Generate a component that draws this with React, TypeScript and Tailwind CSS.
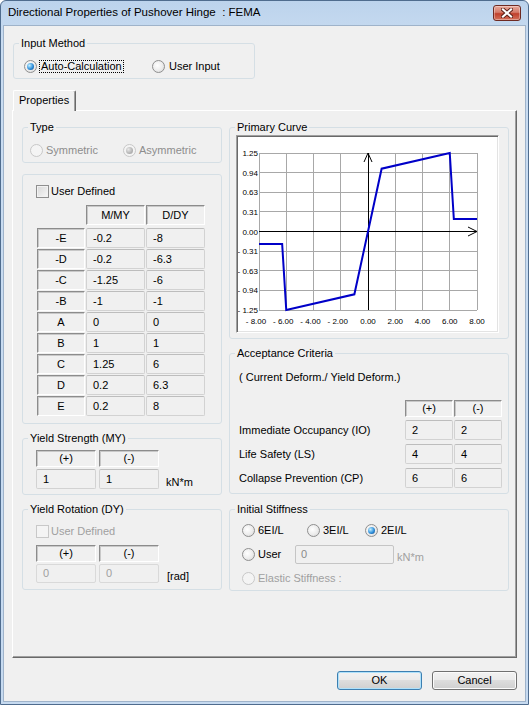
import React from "react";

function Radio({ checked = false, disabled = false }: { checked?: boolean; disabled?: boolean }) {
  return (
    <span
      className={`w-[13px] h-[13px] rounded-full border flex items-center justify-center shrink-0 ${
        disabled
          ? "border-[#c8c8c8] bg-[#f4f4f4]"
          : "border-[#8f8f8f] bg-[radial-gradient(circle_at_40%_40%,#ffffff,#ececec_55%,#d2d2d2)]"
      }`}
    >
      {checked && (
        <span
          className={`w-[7px] h-[7px] rounded-full ${
            disabled
              ? "bg-[radial-gradient(circle_at_35%_35%,#e8e8e8,#b4b4b4_60%,#9a9a9a)]"
              : "bg-[radial-gradient(circle_at_35%_35%,#c4f0ff,#2f90dc_55%,#0b3b78)]"
          }`}
        />
      )}
    </span>
  );
}

function Check({ disabled = false }: { disabled?: boolean }) {
  return (
    <span
      className={`w-[13px] h-[13px] border shrink-0 ${
        disabled
          ? "border-[#c8c8c8] bg-[#f4f4f4]"
          : "border-[#8f8f8f] bg-[linear-gradient(135deg,#d8d8d8,#f8f8f8)] shadow-[inset_0_0_0_1px_#f2f2f2]"
      }`}
    />
  );
}

function Group({
  label,
  className = "",
  children,
}: {
  label: string;
  className?: string;
  children?: React.ReactNode;
}) {
  return (
    <fieldset className={`border border-[#d5dfe5] rounded-[3px] min-w-0 ${className}`}>
      <legend className="ml-[5px] px-[2px] leading-[14px]">{label}</legend>
      {children}
    </fieldset>
  );
}

function Hdr({ children, className = "" }: { children?: React.ReactNode; className?: string }) {
  return (
    <div
      className={`flex items-center justify-center border-t border-l border-r border-b border-t-[#8c8c8c] border-l-[#8c8c8c] border-r-white border-b-white shadow-[inset_1px_1px_0_#c8c8c8] ${className}`}
    >
      {children}
    </div>
  );
}

function Val({
  children,
  className = "",
  disabled = false,
}: {
  children?: React.ReactNode;
  className?: string;
  disabled?: boolean;
}) {
  return (
    <div
      className={`flex items-center pl-[6px] border rounded-[2px] ${
        disabled ? "border-[#d9d9d9] text-[#a0a0a0]" : "border-[#d2d2d2] border-t-[#bdbdbd]"
      } ${className}`}
    >
      {children}
    </div>
  );
}

function Chart() {
  const sx = (v: number) => 130 + v * 13.625;
  const sy = (m: number) => 94.5 - m * 62.8;
  const xs = [-8, -6, -4, -2, 0, 2, 4, 6, 8];
  const ys = [1.25, 0.9375, 0.625, 0.3125, 0, -0.3125, -0.625, -0.9375, -1.25];
  const ylab = ["1.25", "0.94", "0.63", "0.31", "0.00", "- 0.31", "- 0.63", "- 0.94", "- 1.25"];
  const xlab = ["- 8.00", "- 6.00", "- 4.00", "- 2.00", "0.00", "2.00", "4.00", "6.00", "8.00"];
  const pts: [number, number][] = [
    [-8, -0.2],
    [-6.3, -0.2],
    [-6, -1.25],
    [-1, -1],
    [0, 0],
    [1, 1],
    [6, 1.25],
    [6.3, 0.2],
    [8, 0.2],
  ];
  const poly = pts.map(([v, m]) => `${sx(v)},${sy(m)}`).join(" ");
  return (
    <svg width="259" height="194" viewBox="0 0 259 194" className="block">
      {xs.map((v) => (
        <line key={"v" + v} x1={sx(v)} y1={sy(1.25)} x2={sx(v)} y2={sy(-1.25)} stroke="#a8a8a8" strokeWidth="1" shapeRendering="crispEdges" />
      ))}
      {ys.map((m) => (
        <line key={"h" + m} x1={sx(-8)} y1={sy(m)} x2={sx(8)} y2={sy(m)} stroke="#a8a8a8" strokeWidth="1" shapeRendering="crispEdges" />
      ))}
      <line x1={sx(0)} y1={sy(-1.25)} x2={sx(0)} y2={sy(1.25)} stroke="#000" strokeWidth="1" shapeRendering="crispEdges" />
      <line x1={sx(-8)} y1={sy(0)} x2={sx(8)} y2={sy(0)} stroke="#000" strokeWidth="1" shapeRendering="crispEdges" />
      <polyline points={`${sx(0) - 4},${sy(1.25) + 9} ${sx(0)},${sy(1.25)} ${sx(0) + 4},${sy(1.25) + 9}`} fill="none" stroke="#000" strokeWidth="1" />
      <polyline points={`${sx(8) - 9},${sy(0) - 4.5} ${sx(8)},${sy(0)} ${sx(8) - 9},${sy(0) + 4.5}`} fill="none" stroke="#000" strokeWidth="1" />
      <polyline points={poly} fill="none" stroke="#0000c8" strokeWidth="2" strokeLinejoin="miter" />
      {ys.map((m, i) => (
        <text key={"yl" + i} x={20} y={sy(m) + 3} textAnchor="end" fontSize="8" fontFamily="Liberation Sans, Arial, sans-serif" fill="#000">
          {ylab[i]}
        </text>
      ))}
      {xs.map((v, i) => (
        <text key={"xl" + i} x={sx(v) - (v < 0 ? 3 : 0)} y={187} textAnchor="middle" fontSize="8" fontFamily="Liberation Sans, Arial, sans-serif" fill="#000">
          {xlab[i]}
        </text>
      ))}
    </svg>
  );
}

function CloseButton() {
  return (
    <div className="w-[28px] h-[16px] rounded-[3px] border border-[#6e2a22] bg-[linear-gradient(to_bottom,#e9a99b,#d47b6a_45%,#c0402c_55%,#d3705a)] shadow-[inset_0_0_0_1px_rgba(255,255,255,0.35)] flex items-center justify-center">
      <svg width="12" height="10" viewBox="0 0 12 10">
        <path d="M2 1.5 L10 8.5 M10 1.5 L2 8.5" stroke="#5a2018" strokeWidth="4" strokeLinecap="square" />
        <path d="M2 1.5 L10 8.5 M10 1.5 L2 8.5" stroke="#ffffff" strokeWidth="2.2" strokeLinecap="square" />
      </svg>
    </div>
  );
}

export default function App() {
  const rows: [string, string, string][] = [
    ["-E", "-0.2", "-8"],
    ["-D", "-0.2", "-6.3"],
    ["-C", "-1.25", "-6"],
    ["-B", "-1", "-1"],
    ["A", "0", "0"],
    ["B", "1", "1"],
    ["C", "1.25", "6"],
    ["D", "0.2", "6.3"],
    ["E", "0.2", "8"],
  ];
  const acc: [string, string, string][] = [
    ["Immediate Occupancy (IO)", "2", "2"],
    ["Life Safety (LS)", "4", "4"],
    ["Collapse Prevention (CP)", "6", "6"],
  ];
  return (
    <div className="w-[529px] h-[705px] border border-[#4f6c8e] rounded-t-[6px] bg-[linear-gradient(to_bottom,#bcd3ec,#c9dcf1_40px,#c6daf0)] flex flex-col font-['Liberation_Sans',Arial,sans-serif] text-[11px] text-black overflow-hidden">
      {/* Title bar */}
      <div className="h-[24px] flex items-center pl-[7px] pr-[7px] shrink-0">
        <span className="flex-1 text-[11.5px]">Directional Properties of Pushover Hinge&nbsp;&nbsp;: FEMA</span>
        <CloseButton />
      </div>

      {/* Client area */}
      <div className="flex-1 mx-[2px] mb-[2px] border border-[#9fb3ca] bg-[#f0f0f0] flex flex-col">
        {/* Input Method */}
        <Group label="Input Method" className="ml-[9px] mt-[10px] w-[242px] h-[43px]">
          <div className="flex items-center pl-[10px] pt-[8px]">
            <div className="flex items-center gap-[3px] w-[128px]">
              <Radio checked />
              <span className="border border-dotted border-black leading-[11px] px-[1px] -ml-[1px]">Auto-Calculation</span>
            </div>
            <div className="flex items-center gap-[4px]">
              <Radio />
              <span>User Input</span>
            </div>
          </div>
        </Group>

        {/* Tab */}
        <div className="mt-[11px] ml-[9px] w-[63px] h-[21px] -mb-[1px] relative z-10 bg-[#f0f0f0] border-t border-l border-r border-t-white border-l-white border-r-[#696969] shadow-[inset_-1px_0_0_#a0a0a0] rounded-t-[2px] flex items-center pl-[5px] pb-[1px]">
          Properties
        </div>

        {/* Panel */}
        <div className="ml-[8px] w-[505px] h-[548px] border border-t-white border-l-white border-r-[#696969] border-b-[#696969] shadow-[inset_-1px_-1px_0_#a0a0a0] flex gap-[7px] pl-[9px] pt-[9px]">
          {/* Left column */}
          <div className="w-[200px] flex flex-col">
            <Group label="Type" className="h-[43px]">
              <div className="flex items-center pl-[7px] pt-[8px] text-[#8d8d8d]">
                <div className="flex items-center gap-[3px] w-[93px]">
                  <Radio disabled />
                  <span>Symmetric</span>
                </div>
                <div className="flex items-center gap-[3px]">
                  <Radio disabled checked />
                  <span>Asymmetric</span>
                </div>
              </div>
            </Group>

            <div className="mt-[11px] h-[250px] border border-[#d5dfe5] rounded-[3px] pt-[10px] pl-[13px]">
              <div className="flex items-center gap-[2px] h-[13px]">
                <Check />
                <span>User Defined</span>
              </div>
              <div className="ml-[1px] mt-[7px] flex gap-[1px]">
                <div className="w-[48px]" />
                <Hdr className="w-[59px] h-[20px]">M/MY</Hdr>
                <Hdr className="w-[59px] h-[20px]">D/DY</Hdr>
              </div>
              <div className="ml-[1px] mt-[3px] flex flex-col gap-[1px]">
                {rows.map(([k, a, b]) => (
                  <div key={k} className="flex gap-[1px]">
                    <Hdr className="w-[48px] h-[20px]">{k}</Hdr>
                    <Val className="w-[59px] h-[20px]">{a}</Val>
                    <Val className="w-[59px] h-[20px]">{b}</Val>
                  </div>
                ))}
              </div>
            </div>

            <Group label="Yield Strength (MY)" className="mt-[7px] h-[64px]">
              <div className="pl-[13px] pt-[5px]">
                <div className="flex gap-[3px]">
                  <Hdr className="w-[60px] h-[17px]">(+)</Hdr>
                  <Hdr className="w-[60px] h-[17px]">(-)</Hdr>
                </div>
                <div className="mt-[2px] flex gap-[3px]">
                  <Val className="w-[60px] h-[20px]">1</Val>
                  <Val className="w-[60px] h-[20px]">1</Val>
                  <span className="ml-[4px] self-end leading-[14px]">kN*m</span>
                </div>
              </div>
            </Group>

            <Group label="Yield Rotation (DY)" className="mt-[7px] h-[88px]">
              <div className="pl-[13px] pt-[9px]">
                <div className="flex items-center gap-[2px] h-[13px] text-[#a0a0a0]">
                  <Check disabled />
                  <span>User Defined</span>
                </div>
                <div className="mt-[7px] flex gap-[3px]">
                  <Hdr className="w-[60px] h-[17px]">(+)</Hdr>
                  <Hdr className="w-[60px] h-[17px]">(-)</Hdr>
                </div>
                <div className="mt-[2px] flex gap-[3px]">
                  <Val disabled className="w-[60px] h-[19px]">0</Val>
                  <Val disabled className="w-[60px] h-[19px]">0</Val>
                  <span className="ml-[5px] self-end leading-[14px]">[rad]</span>
                </div>
              </div>
            </Group>
          </div>

          {/* Right column */}
          <div className="w-[280px] flex flex-col">
            <Group label="Primary Curve" className="h-[219px]">
              <div className="ml-[6px] mt-[1px] w-[263px] h-[198px] bg-white border border-t-[#a0a0a0] border-l-[#a0a0a0] border-r-white border-b-white shadow-[inset_1px_1px_0_#696969,inset_-1px_-1px_0_#e3e3e3] p-[1px] overflow-hidden">
                <Chart />
              </div>
            </Group>

            <Group label="Acceptance Criteria" className="mt-[7px] h-[148px]">
              <div className="pl-[9px] pt-[11px] leading-[12px]">( Current Deform./ Yield Deform.)</div>
              <div className="mt-[17px] flex justify-end gap-[1px] pr-[6px]">
                <Hdr className="w-[48px] h-[17px]">(+)</Hdr>
                <Hdr className="w-[48px] h-[17px]">(-)</Hdr>
              </div>
              <div className="mt-[3px] flex flex-col gap-[4px] pr-[6px]">
                {acc.map(([l, a, b]) => (
                  <div key={l} className="flex items-center gap-[1px]">
                    <span className="flex-1 pl-[9px]">{l}</span>
                    <Val className="w-[48px] h-[20px]">{a}</Val>
                    <Val className="w-[48px] h-[20px]">{b}</Val>
                  </div>
                ))}
              </div>
            </Group>

            <Group label="Initial Stiffness" className="mt-[8px] h-[89px]">
              <div className="pl-[12px] pt-[4px] flex flex-col gap-[4px]">
                <div className="h-[20px] flex items-center">
                  <div className="flex items-center gap-[3px] w-[65px]">
                    <Radio />
                    <span>6EI/L</span>
                  </div>
                  <div className="flex items-center gap-[3px] w-[58px]">
                    <Radio />
                    <span>3EI/L</span>
                  </div>
                  <div className="flex items-center gap-[3px]">
                    <Radio checked />
                    <span>2EI/L</span>
                  </div>
                </div>
                <div className="h-[20px] flex items-center">
                  <div className="flex items-center gap-[3px] w-[53px]">
                    <Radio />
                    <span>User</span>
                  </div>
                  <div className="w-[99px] h-[19px] border border-[#c5c5c5] rounded-[2px] flex items-center pl-[5px] text-[#8a8a8a]">0</div>
                  <span className="ml-[3px] text-[#a0a0a0] self-end leading-[14px]">kN*m</span>
                </div>
                <div className="h-[20px] flex items-center gap-[3px] text-[#a0a0a0]">
                  <Radio disabled />
                  <span>Elastic Stiffness :</span>
                </div>
              </div>
            </Group>
          </div>
        </div>

        {/* Buttons */}
        <div className="mt-[13px] flex justify-end gap-[10px] pr-[8px]">
          <button className="w-[85px] h-[19px] rounded-[3px] border border-[#3c7fb1] bg-[linear-gradient(to_bottom,#f2f2f2,#ebebeb_45%,#dddddd_50%,#cfcfcf)] shadow-[inset_0_0_0_1px_#aee1fb] flex items-center justify-center">
            OK
          </button>
          <button className="w-[85px] h-[19px] rounded-[3px] border border-[#707070] bg-[linear-gradient(to_bottom,#f2f2f2,#ebebeb_45%,#dddddd_50%,#cfcfcf)] shadow-[inset_0_0_0_1px_#fbfbfb] flex items-center justify-center">
            Cancel
          </button>
        </div>
      </div>
    </div>
  );
}
